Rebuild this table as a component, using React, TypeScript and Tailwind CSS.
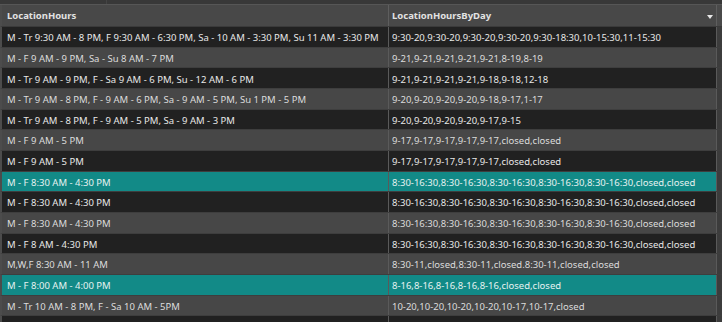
const rows: [string, string][] = [
  ["M - Tr 9:30 AM - 8 PM, F 9:30 AM - 6:30 PM, Sa - 10 AM - 3:30 PM, Su 11 AM - 3:30 PM", "9:30-20,9:30-20,9:30-20,9:30-20,9:30-18:30,10-15:30,11-15:30"],
  ["M - F 9 AM - 9 PM, Sa - Su 8 AM - 7 PM", "9-21,9-21,9-21,9-21,9-21,8-19,8-19"],
  ["M - Tr 9 AM - 9 PM, F - Sa 9 AM - 6 PM, Su - 12 AM - 6 PM", "9-21,9-21,9-21,9-21,9-18,9-18,12-18"],
  ["M - Tr 9 AM - 8 PM, F - 9 AM - 6 PM, Sa - 9 AM - 5 PM, Su 1 PM - 5 PM", "9-20,9-20,9-20,9-20,9-18,9-17,1-17"],
  ["M - Tr 9 AM - 8 PM, F - 9 AM - 5 PM, Sa - 9 AM - 3 PM", "9-20,9-20,9-20,9-20,9-17,9-15"],
  ["M - F 9 AM - 5 PM", "9-17,9-17,9-17,9-17,9-17,closed,closed"],
  ["M - F 9 AM - 5 PM", "9-17,9-17,9-17,9-17,9-17,closed,closed"],
  ["M - F 8:30 AM - 4:30 PM", "8:30-16:30,8:30-16:30,8:30-16:30,8:30-16:30,8:30-16:30,closed,closed"],
  ["M - F 8:30 AM - 4:30 PM", "8:30-16:30,8:30-16:30,8:30-16:30,8:30-16:30,8:30-16:30,closed,closed"],
  ["M - F 8:30 AM - 4:30 PM", "8:30-16:30,8:30-16:30,8:30-16:30,8:30-16:30,8:30-16:30,closed,closed"],
  ["M - F 8 AM - 4:30 PM", "8:30-16:30,8:30-16:30,8:30-16:30,8:30-16:30,8:30-16:30,closed,closed"],
  ["M,W,F 8:30 AM - 11 AM", "8:30-11,closed,8:30-11,closed.8:30-11,closed,closed"],
  ["M - F 8:00 AM - 4:00 PM", "8-16,8-16,8-16,8-16,8-16,closed,closed"],
  ["M - Tr 10 AM - 8 PM, F - Sa 10 AM - 5PM", "10-20,10-20,10-20,10-20,10-17,10-17,closed"],
  ["", ""],
]

const selected = new Set([7, 12])

function rowBg(i: number) {
  if (selected.has(i)) return "bg-[#128a87] text-[#e6f2f1]"
  return i % 2 === 0 ? "bg-[#212121] text-[#e8e8e8]" : "bg-[#474747] text-[#dcdcdc]"
}

export default function App() {
  return (
    <div className="w-[722px] h-[322px] overflow-hidden bg-[#2b2b2b] text-[9.5px] font-['Noto_Sans',sans-serif]">
      <div className="flex h-[5px] border-b border-[#565656] bg-[#383838]">
        <div className="w-[107px] border-r border-[#444]" />
      </div>
      <div className="flex h-[22px] border-b border-[#3a3a3a] border-l-2 border-l-[#4c4c4c] bg-[#484848] font-bold text-[#e2e2e2]">
        <div className="w-[387px] border-r border-[#5e5e5e] pl-[5px] pt-[2px] flex items-center">LocationHours</div>
        <div className="w-[327px] pl-[3px] pt-[2px] flex items-center justify-between pr-[3px]">
          <span>LocationHoursByDay</span>
          <svg width="6" height="4" viewBox="0 0 6 4">
            <path d="M0 0h6L3 4z" fill="#e8e8e8" />
          </svg>
        </div>
        <div className="w-[1px] bg-[#5e5e5e]" />
        <div className="flex-1 bg-[#4a4a4a]" />
      </div>
      {rows.map(([a, b], i) => (
        <div key={i} className="flex h-[20.67px] border-b border-[#3e3e3e] border-l-2 border-l-[#4c4c4c]">
          <div className={`w-[387px] border-r border-[#5a5a5a] pl-[5px] pt-[3px] flex items-center whitespace-nowrap overflow-hidden ${rowBg(i)}`}>{a}</div>
          <div className={`w-[327px] pl-[3px] pt-[3px] flex items-center whitespace-nowrap overflow-hidden ${rowBg(i)}`}>{b}</div>
          <div className="w-[1px] bg-[#5a5a5a]" />
          <div className="flex-1 bg-[#3c3c3c]" />
        </div>
      ))}
    </div>
  )
}
